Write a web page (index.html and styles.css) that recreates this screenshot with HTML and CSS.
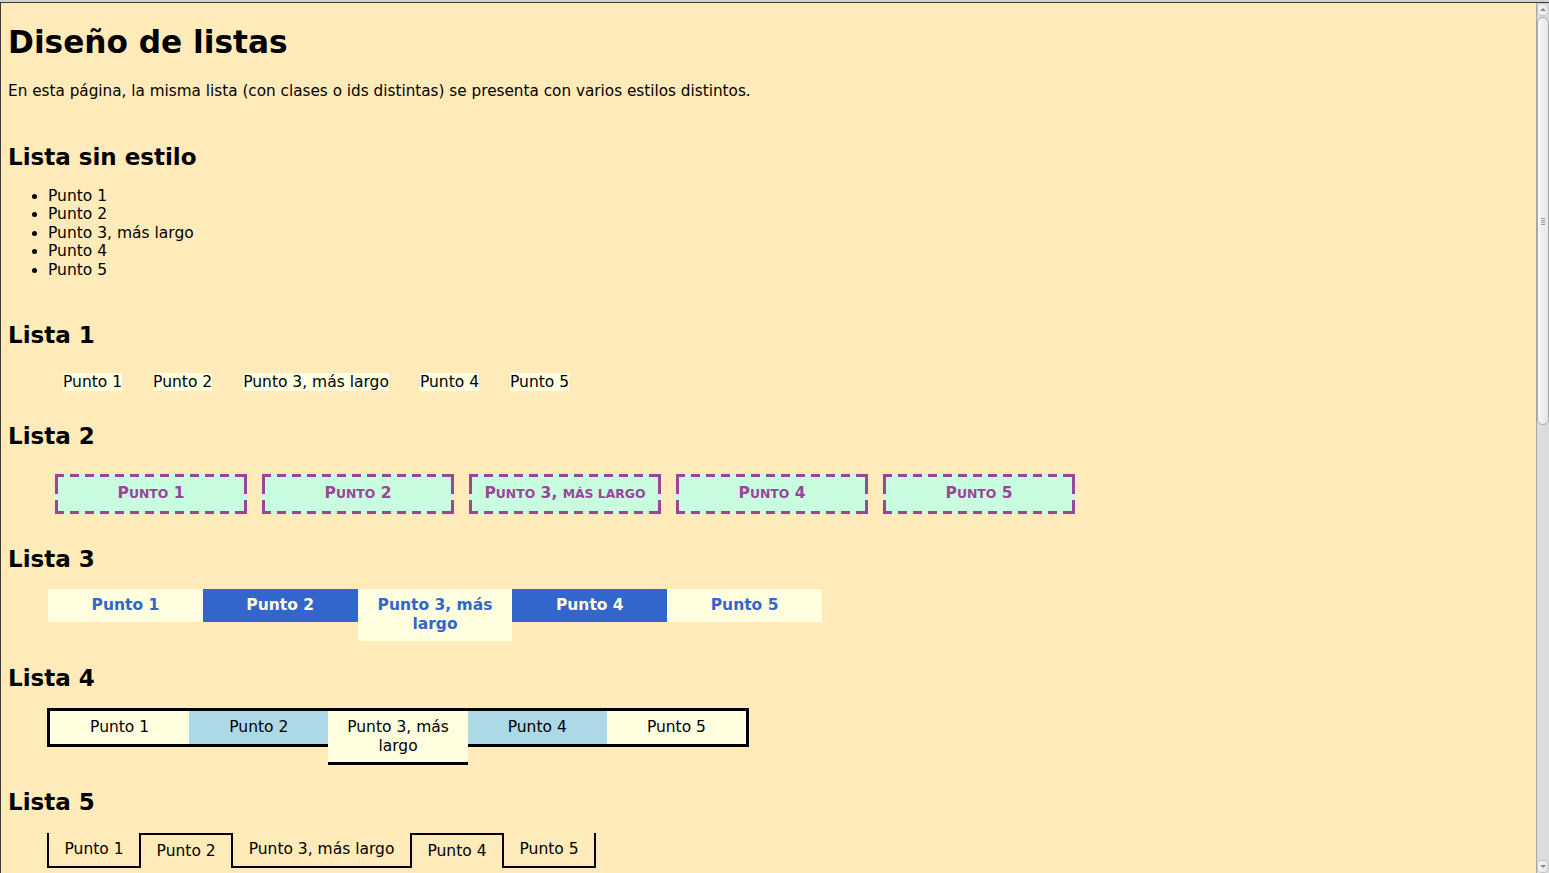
FILE: index.html
```html
<!DOCTYPE html>
<html lang="es">
<head>
<meta charset="utf-8">
<title>Diseño de listas</title>
<link rel="stylesheet" href="styles.css">
</head>
<body>
<div class="window">
  <div class="topbar"></div>
  <div class="viewport">
    <main class="page">
      <h1 class="title">Diseño de listas</h1>
      <p class="intro">En esta página, la misma lista (con clases o ids distintas) se presenta con varios estilos distintos.</p>

      <h2 class="heading h-plain">Lista sin estilo</h2>
      <ul class="plain">
        <li>Punto 1</li>
        <li>Punto 2</li>
        <li>Punto 3, más largo</li>
        <li>Punto 4</li>
        <li>Punto 5</li>
      </ul>

      <h2 class="heading h-l1">Lista 1</h2>
      <ul class="list1">
        <li>Punto 1</li>
        <li>Punto 2</li>
        <li>Punto 3, más largo</li>
        <li>Punto 4</li>
        <li>Punto 5</li>
      </ul>

      <h2 class="heading h-l2">Lista 2</h2>
      <ul class="list2">
        <li>P<span class="sc">unto</span> 1</li>
        <li>P<span class="sc">unto</span> 2</li>
        <li>P<span class="sc">unto</span> 3, <span class="sc">más largo</span></li>
        <li>P<span class="sc">unto</span> 4</li>
        <li>P<span class="sc">unto</span> 5</li>
      </ul>

      <h2 class="heading h-l3">Lista 3</h2>
      <ul class="list3">
        <li>Punto 1</li>
        <li>Punto 2</li>
        <li>Punto 3, más largo</li>
        <li>Punto 4</li>
        <li>Punto 5</li>
      </ul>

      <h2 class="heading h-l4">Lista 4</h2>
      <ul class="list4">
        <li>Punto 1</li>
        <li>Punto 2</li>
        <li>Punto 3, más largo</li>
        <li>Punto 4</li>
        <li>Punto 5</li>
      </ul>

      <h2 class="heading h-l5">Lista 5</h2>
      <ul class="list5">
        <li>Punto 1</li>
        <li>Punto 2</li>
        <li>Punto 3, más largo</li>
        <li>Punto 4</li>
        <li>Punto 5</li>
      </ul>
    </main>
    <div class="scrollbar">
      <div class="sb-btn"><span class="arrow-up"></span></div>
      <div class="sb-thumb"><span class="grip"></span></div>
      <div class="sb-track"></div>
      <div class="sb-btn"><span class="arrow-down"></span></div>
    </div>
  </div>
</div>
</body>
</html>
```

FILE: styles.css
```css
html, body {
  margin: 0;
  height: 100%;
}

body {
  background: #ffebb9;
  color: #000;
  font-family: "DejaVu Sans", "Noto Sans", sans-serif;
  font-size: 15.5px;
  line-height: 18.5px;
  overflow: hidden;
}

.window {
  display: flex;
  flex-direction: column;
  height: 100vh;
}

.topbar {
  flex: none;
  height: 2px;
  background: #d2d2d2;
  border-bottom: 1px solid #3a3a3a;
}

.viewport {
  flex: 1;
  display: flex;
  min-height: 0;
}

.page {
  flex: 1;
  min-width: 0;
  display: flex;
  flex-direction: column;
  align-items: flex-start;
  border-left: 1px solid #3a3a3a;
  padding: 0 7px;
  overflow: hidden;
}

.title {
  margin: 21px 0 0;
  font-size: 31.2px;
  line-height: 36px;
  font-weight: bold;
}

.intro {
  margin: 21.75px 0 0;
  font-size: 15.25px;
}

.heading {
  margin: 0;
  font-size: 23px;
  line-height: 27px;
  font-weight: bold;
}

.h-plain { margin-top: 43.25px; }
.h-l1 { margin-top: 42.25px; }
.h-l2 { margin-top: 31.5px; }
.h-l3 { margin-top: 32px; }
.h-l4 { margin-top: 42.5px; }
.h-l5 { margin-top: 42px; }

ul {
  margin: 0;
  padding: 0;
}

/* Lista sin estilo */
.plain {
  margin-top: 16.25px;
  padding-left: 40px;
  list-style: disc;
}

/* Lista 1 */
.list1 {
  margin-top: 24px;
  padding-left: 55px;
  list-style: none;
  display: flex;
  gap: 31px;
}

.list1 li {
  background: #ffffe0;
}

/* Lista 2 */
.list2 {
  margin-top: 24.5px;
  padding-left: 47px;
  list-style: none;
  display: flex;
  gap: 15px;
}

.list2 li {
  box-sizing: border-box;
  width: 192px;
  padding: 10px 0;
  background:
    repeating-linear-gradient(to right, #9a449a 0 9px, transparent 9px 15px) left top / 100% 3px no-repeat,
    repeating-linear-gradient(to right, #9a449a 0 9px, transparent 9px 15px) left bottom / 100% 3px no-repeat,
    repeating-linear-gradient(to bottom, #9a449a 0 20px, transparent 20px 26px) left top / 3px 100% no-repeat,
    repeating-linear-gradient(to bottom, #9a449a 0 20px, transparent 20px 26px) right top / 3px 100% no-repeat,
    #c8fde0;
  color: #9a449a;
  font-weight: bold;
  text-align: center;
}

.list2 .sc {
  font-size: 80%;
  text-transform: uppercase;
}

/* Lista 3 */
.list3 {
  margin-top: 16.5px;
  padding-left: 40px;
  list-style: none;
  display: flex;
  align-items: flex-start;
  height: 33px;
}

.list3 li {
  box-sizing: border-box;
  width: 154.8px;
  padding: 7.25px 0;
  background: #ffffe0;
  color: #3366cc;
  font-weight: bold;
  text-align: center;
}

.list3 li:nth-child(even) {
  background: #3366cc;
  color: #ffffe0;
}

/* Lista 4 */
.list4 {
  margin-top: 16.5px;
  margin-left: 39px;
  list-style: none;
  display: flex;
  align-items: flex-start;
  width: 696px;
  height: 35.5px;
  border: 3px solid #000;
  border-bottom: 0;
}

.list4 li {
  flex: 1 1 0;
  padding: 7px 0;
  background: #ffffe0;
  border-bottom: 3px solid #000;
  text-align: center;
}

.list4 li:nth-child(even) {
  background: #add8e6;
}

/* Lista 5 */
.list5 {
  margin-top: 17.5px;
  margin-left: 39px;
  list-style: none;
  display: flex;
  align-items: flex-start;
}

.list5 li {
  padding: 7px 15.5px;
  border-left: 2px solid #000;
  border-right: 2px solid #000;
  border-bottom: 2px solid #000;
}

.list5 li:nth-child(even) {
  border: 0;
  border-top: 2px solid #000;
}

/* Scrollbar */
.scrollbar {
  flex: none;
  width: 13px;
  box-sizing: border-box;
  display: flex;
  flex-direction: column;
  background: #dcdcdc;
  border-left: 1px solid #a6a6a6;
}

.sb-btn {
  flex: none;
  height: 13px;
  display: flex;
  align-items: center;
  justify-content: center;
  background: linear-gradient(to right, #f6f6f6, #e4e4e4);
  border-radius: 5px;
  box-shadow: inset 0 0 0 1px #c4c4c4;
}

.arrow-up {
  width: 0;
  height: 0;
  border-left: 3px solid transparent;
  border-right: 3px solid transparent;
  border-bottom: 3px solid #8a8a8a;
}

.arrow-down {
  width: 0;
  height: 0;
  border-left: 3px solid transparent;
  border-right: 3px solid transparent;
  border-top: 3px solid #8a8a8a;
}

.sb-thumb {
  flex: none;
  height: 406px;
  margin: 1px 0 0;
  display: flex;
  align-items: center;
  justify-content: center;
  border: 1px solid #a9a9a9;
  border-radius: 6px;
  background: linear-gradient(to right, #f7f7f7, #e6e6e6);
}

.grip {
  width: 4px;
  height: 7px;
  background: repeating-linear-gradient(to bottom, #9a9a9a 0, #9a9a9a 1px, transparent 1px, transparent 2px);
}

.sb-track {
  flex: 1;
}
```
